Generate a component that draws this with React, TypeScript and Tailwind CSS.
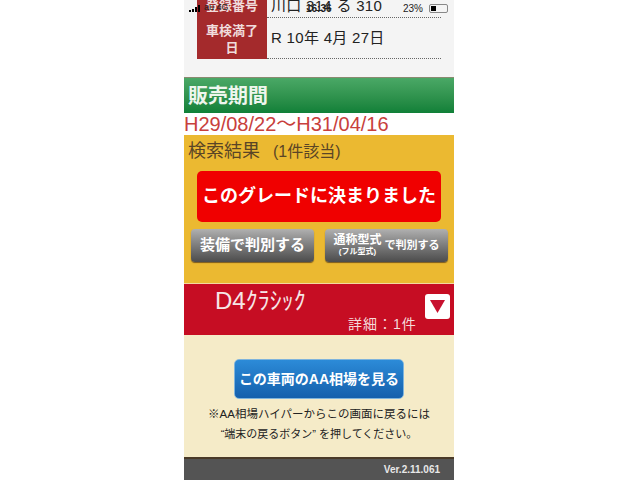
const font = { fontFamily: '"Liberation Sans", "Noto Sans CJK JP", sans-serif' };

const StatusBar = () => (
  <div className="absolute left-0 top-0 flex h-[16px] w-full items-center text-[9px] text-[#222]">
    <div className="ml-[5px] flex items-end gap-[1px]">
      <span className="h-[2px] w-[2px] bg-black" />
      <span className="h-[3px] w-[2px] bg-black" />
      <span className="h-[5px] w-[2px] bg-black" />
      <span className="h-[7px] w-[2px] bg-black" />
    </div>
    <span className="ml-[4px]">au 4G</span>
    <span className="absolute left-[122px] text-[10px] font-bold">16:36</span>
    <span className="absolute left-[219px] text-[10px]">23%</span>
    <div className="absolute left-[245px] flex h-[9px] w-[19px] items-center rounded-[2px] border border-[#888] p-[1px]">
      <span className="h-full w-[5px] bg-black" />
    </div>
  </div>
);

const VehicleRow = ({ label, value, tall }: { label: string; value: string; tall?: boolean }) => (
  <div className={`flex ${tall ? 'h-[41px]' : 'h-[26px]'}`}>
    <div className="flex w-[70px] items-center justify-center bg-[#a42a2c] px-[6px] text-center text-[13px] leading-[17px] font-bold text-[#f0dcdc]">
      {label}
    </div>
    <div
      className={`flex w-[174px] items-center border-b border-dotted border-[#666] pl-[4px] text-[15px] tracking-[0.3px] whitespace-nowrap text-[#222] ${tall ? '' : 'pt-[3px]'}`}
    >
      {value}
    </div>
  </div>
);

const GrayButton = ({ children, className }: { children: React.ReactNode; className: string }) => (
  <div
    className={`flex h-[33px] items-center justify-center rounded-[4px] bg-gradient-to-b from-[#b0b0b0] to-[#4c4c4c] font-bold text-white shadow-[0_1px_1px_#7a5a20] ${className}`}
  >
    {children}
  </div>
);

export default function App() {
  return (
    <div className="flex h-[480px] w-[640px] justify-center overflow-hidden bg-white" style={font}>
      <div className="relative ml-[-2px] flex h-[480px] w-[270px] flex-col overflow-hidden">
        <div className="h-[78px] shrink-0 border-b border-[#8a8a70] bg-[#f4f4f4] pl-[13px]">
          <div className="mt-[-8px]">
            <VehicleRow label="登録番号" value="川口 314 る 310" />
            <VehicleRow label="車検満了日" value="R 10年 4月 27日" tall />
          </div>
        </div>
        <StatusBar />
        <div className="flex h-[35px] shrink-0 items-center bg-gradient-to-b from-[#4aa866] to-[#0f8038] pl-[4px] text-[20px] font-bold text-[#eef6ee]">
          販売期間
        </div>
        <div className="h-[22px] shrink-0 bg-white text-[20px] leading-[22px] whitespace-nowrap text-[#c8403c]">
          H29/08/22～H31/04/16
        </div>
        <div className="h-[148px] shrink-0 bg-[#ebb931] px-[13px]">
          <div className="ml-[-9px] flex h-[33px] items-center text-[18px] text-[#5a4526]">
            検索結果<span className="ml-[13px] text-[16px]">(1件該当)</span>
          </div>
          <div className="mt-[3px] flex h-[51px] w-[244px] items-center justify-center rounded-[5px] bg-[#f00000] text-[18px] font-bold whitespace-nowrap text-white">
            このグレードに決まりました
          </div>
          <div className="mt-[7px] ml-[-6px] flex w-[257px] justify-between">
            <GrayButton className="w-[123px] text-[15px]">装備で判別する</GrayButton>
            <GrayButton className="w-[123px] text-[11px]">
              <span className="flex flex-col items-center leading-[11px]">
                <span className="text-[12px]">通称型式</span>
                <span className="text-[8px]">(フル型式)</span>
              </span>
              <span className="ml-[3px]">で判別する</span>
            </GrayButton>
          </div>
        </div>
        <div className="relative h-[52px] shrink-0 border-t border-[#f4d9a0] bg-[#c60d23] text-[#f4dada]">
          <div className="pt-[2px] pl-[31px] text-[24px] leading-[30px] text-[#f6e6e6]">D4ｸﾗｼｯｸ</div>
          <div className="absolute top-[30px] left-[164px] text-[14px] leading-[20px] tracking-[1px]">詳細：1件</div>
          <div className="absolute top-[10px] left-[241px] flex h-[25px] w-[25px] items-center justify-center rounded-[3px] bg-white">
            <svg width="15" height="13" viewBox="0 0 15 13">
              <polygon points="0,0 15,0 7.5,13" fill="#c8102e" />
            </svg>
          </div>
        </div>
        <div className="flex h-[122px] shrink-0 flex-col items-center bg-[#f5ebc8]">
          <div className="mt-[24px] flex h-[40px] w-[170px] items-center justify-center rounded-[5px] border border-[#7fb4dc] bg-gradient-to-b from-[#2c8bd8] to-[#1560ac] text-[14px] font-bold whitespace-nowrap text-white">
            この車両のAA相場を見る
          </div>
          <div className="mt-[5px] text-center text-[11.5px] leading-[20px] text-[#222]">
            <div>※AA相場ハイパーからこの画面に戻るには</div>
            <div className="text-[11px]">“端末の戻るボタン” を押してください。</div>
          </div>
        </div>
        <div className="flex flex-1 items-center justify-end border-t-2 border-[#4a3a28] bg-[#545454] pr-[14px] text-[10px] font-bold text-[#e8e8e8]">
          Ver.2.11.061
        </div>
      </div>
    </div>
  );
}
